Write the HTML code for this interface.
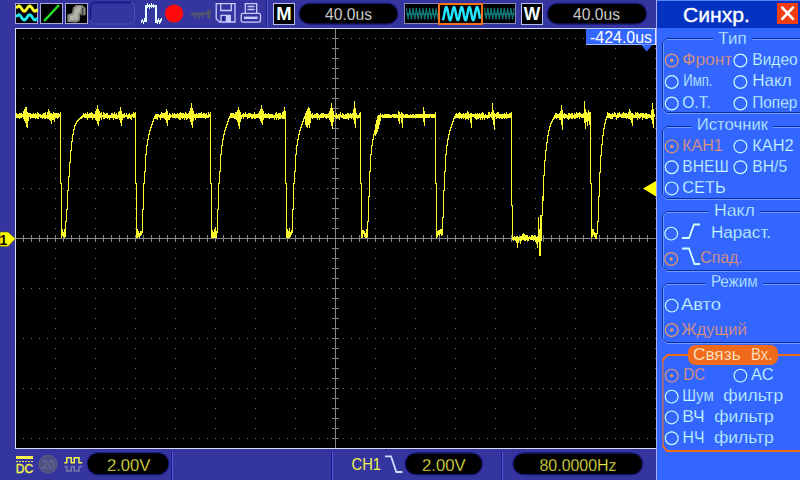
<!DOCTYPE html>
<html lang="ru"><head><meta charset="utf-8"><title>Синхр.</title>
<style>
html,body{margin:0;padding:0;background:#35359f;overflow:hidden}
svg{display:block;font-family:"Liberation Sans",sans-serif}
.c{shape-rendering:crispEdges}
</style></head><body>
<svg width="800" height="480" viewBox="0 0 800 480">
<rect width="800" height="480" fill="#35359f"/>
<g class="c">
<rect x="15" y="28" width="641" height="421" fill="#dadaff"/>
<rect x="16" y="29" width="640" height="419" fill="#000"/>
<path d="M23 38.5H656" stroke="#707070" stroke-dasharray="1 7" fill="none"/>
<path d="M23 88.5H656" stroke="#707070" stroke-dasharray="1 7" fill="none"/>
<path d="M23 138.5H656" stroke="#707070" stroke-dasharray="1 7" fill="none"/>
<path d="M23 188.5H656" stroke="#707070" stroke-dasharray="1 7" fill="none"/>
<path d="M23 288.5H656" stroke="#707070" stroke-dasharray="1 7" fill="none"/>
<path d="M23 338.5H656" stroke="#707070" stroke-dasharray="1 7" fill="none"/>
<path d="M23 388.5H656" stroke="#707070" stroke-dasharray="1 7" fill="none"/>
<path d="M23 438.5H656" stroke="#707070" stroke-dasharray="1 7" fill="none"/>
<path d="M55.5 38V439" stroke="#707070" stroke-dasharray="1 9" fill="none"/>
<path d="M95.5 38V439" stroke="#707070" stroke-dasharray="1 9" fill="none"/>
<path d="M135.5 38V439" stroke="#707070" stroke-dasharray="1 9" fill="none"/>
<path d="M175.5 38V439" stroke="#707070" stroke-dasharray="1 9" fill="none"/>
<path d="M215.5 38V439" stroke="#707070" stroke-dasharray="1 9" fill="none"/>
<path d="M255.5 38V439" stroke="#707070" stroke-dasharray="1 9" fill="none"/>
<path d="M295.5 38V439" stroke="#707070" stroke-dasharray="1 9" fill="none"/>
<path d="M375.5 38V439" stroke="#707070" stroke-dasharray="1 9" fill="none"/>
<path d="M415.5 38V439" stroke="#707070" stroke-dasharray="1 9" fill="none"/>
<path d="M455.5 38V439" stroke="#707070" stroke-dasharray="1 9" fill="none"/>
<path d="M495.5 38V439" stroke="#707070" stroke-dasharray="1 9" fill="none"/>
<path d="M535.5 38V439" stroke="#707070" stroke-dasharray="1 9" fill="none"/>
<path d="M575.5 38V439" stroke="#707070" stroke-dasharray="1 9" fill="none"/>
<path d="M615.5 38V439" stroke="#707070" stroke-dasharray="1 9" fill="none"/>
<path d="M655.5 38V439" stroke="#707070" stroke-dasharray="1 9" fill="none"/>
<path d="M16 238.5H655M335.5 29V448" stroke="#868686" fill="none"/>
<path d="M23.5 235V242M31.5 235V242M39.5 235V242M47.5 235V242M55.5 235V242M63.5 235V242M71.5 235V242M79.5 235V242M87.5 235V242M95.5 235V242M103.5 235V242M111.5 235V242M119.5 235V242M127.5 235V242M135.5 235V242M143.5 235V242M151.5 235V242M159.5 235V242M167.5 235V242M175.5 235V242M183.5 235V242M191.5 235V242M199.5 235V242M207.5 235V242M215.5 235V242M223.5 235V242M231.5 235V242M239.5 235V242M247.5 235V242M255.5 235V242M263.5 235V242M271.5 235V242M279.5 235V242M287.5 235V242M295.5 235V242M303.5 235V242M311.5 235V242M319.5 235V242M327.5 235V242M335.5 235V242M343.5 235V242M351.5 235V242M359.5 235V242M367.5 235V242M375.5 235V242M383.5 235V242M391.5 235V242M399.5 235V242M407.5 235V242M415.5 235V242M423.5 235V242M431.5 235V242M439.5 235V242M447.5 235V242M455.5 235V242M463.5 235V242M471.5 235V242M479.5 235V242M487.5 235V242M495.5 235V242M503.5 235V242M511.5 235V242M519.5 235V242M527.5 235V242M535.5 235V242M543.5 235V242M551.5 235V242M559.5 235V242M567.5 235V242M575.5 235V242M583.5 235V242M591.5 235V242M599.5 235V242M607.5 235V242M615.5 235V242M623.5 235V242M631.5 235V242M639.5 235V242M647.5 235V242M332 38.5H339M332 48.5H339M332 58.5H339M332 68.5H339M332 78.5H339M332 88.5H339M332 98.5H339M332 108.5H339M332 118.5H339M332 128.5H339M332 138.5H339M332 148.5H339M332 158.5H339M332 168.5H339M332 178.5H339M332 188.5H339M332 198.5H339M332 208.5H339M332 218.5H339M332 228.5H339M332 238.5H339M332 248.5H339M332 258.5H339M332 268.5H339M332 278.5H339M332 288.5H339M332 298.5H339M332 308.5H339M332 318.5H339M332 328.5H339M332 338.5H339M332 348.5H339M332 358.5H339M332 368.5H339M332 378.5H339M332 388.5H339M332 398.5H339M332 408.5H339M332 418.5H339M332 428.5H339M332 438.5H339" stroke="#868686" fill="none"/>
<path d="M16.5 113V118M17.5 114V118M18.5 114V118M19.5 113V119M20.5 113V118M21.5 113V118M22.5 114V117M23.5 111V119M24.5 109V121M25.5 107V123M26.5 107V127M27.5 112V128M28.5 113V121M29.5 113V117M30.5 113V119M31.5 114V118M32.5 114V118M33.5 113V118M34.5 114V118M35.5 113V119M36.5 114V118M37.5 112V119M38.5 113V119M39.5 114V117M40.5 114V118M41.5 115V118M42.5 114V119M43.5 113V118M44.5 113V119M45.5 112V119M46.5 115V118M47.5 112V119M48.5 109V119M49.5 111V120M50.5 113V121M51.5 113V124M52.5 114V120M53.5 112V120M54.5 113V122M55.5 113V118M56.5 113V118M57.5 113V119M58.5 113V118M59.5 114V117M60.5 112V184M61.5 183V238M62.5 229V236M63.5 232V237M64.5 229V238M65.5 221V237M66.5 209V222M67.5 190V210M68.5 176V191M69.5 162V177M70.5 150V163M71.5 141V151M72.5 134V142M73.5 129V135M74.5 125V130M75.5 123V126M76.5 121V124M77.5 120V122M78.5 119V121M79.5 118V120M80.5 117V119M81.5 116V119M82.5 115V118M83.5 113V117M84.5 114V118M85.5 113V118M86.5 114V118M87.5 112V120M88.5 114V118M89.5 113V118M90.5 113V118M91.5 112V118M92.5 113V120M93.5 114V118M94.5 114V118M95.5 111V120M96.5 109V121M97.5 105V124M98.5 109V126M99.5 111V121M100.5 113V118M101.5 112V120M102.5 115V117M103.5 112V119M104.5 113V119M105.5 114V118M106.5 113V118M107.5 113V119M108.5 115V118M109.5 115V120M110.5 115V118M111.5 113V118M112.5 113V118M113.5 114V120M114.5 112V118M115.5 114V119M116.5 113V119M117.5 115V119M118.5 112V118M119.5 111V120M120.5 107V123M121.5 111V126M122.5 114V120M123.5 114V118M124.5 113V118M125.5 115V117M126.5 113V117M127.5 115V119M128.5 114V119M129.5 113V118M130.5 115V119M131.5 114V120M132.5 114V117M133.5 112V118M134.5 113V118M135.5 112V184M136.5 183V238M137.5 229V238M138.5 231V237M139.5 233V238M140.5 231V236M141.5 231V235M142.5 209V233M143.5 183V210M144.5 171V184M145.5 154V172M146.5 145V155M147.5 139V146M148.5 134V140M149.5 130V135M150.5 127V131M151.5 124V128M152.5 121V125M153.5 118V122M154.5 116V119M155.5 114V119M156.5 114V119M157.5 114V120M158.5 114V117M159.5 115V118M160.5 114V120M161.5 112V118M162.5 113V118M163.5 113V118M164.5 113V119M165.5 112V120M166.5 109V123M167.5 111V126M168.5 115V120M169.5 113V120M170.5 114V118M171.5 115V117M172.5 113V118M173.5 114V118M174.5 113V118M175.5 114V118M176.5 114V118M177.5 113V118M178.5 114V119M179.5 113V120M180.5 112V120M181.5 113V118M182.5 113V119M183.5 113V118M184.5 114V120M185.5 112V118M186.5 113V120M187.5 114V119M188.5 113V118M189.5 111V119M190.5 108V122M191.5 103V125M192.5 108V128M193.5 111V121M194.5 114V118M195.5 114V120M196.5 113V118M197.5 114V118M198.5 113V118M199.5 113V118M200.5 113V118M201.5 112V118M202.5 114V118M203.5 113V118M204.5 113V118M205.5 114V119M206.5 113V118M207.5 115V118M208.5 112V118M209.5 114V117M210.5 112V184M211.5 183V238M212.5 230V238M213.5 232V238M214.5 229V238M215.5 227V238M216.5 231V238M217.5 209V233M218.5 183V210M219.5 171V184M220.5 154V172M221.5 145V155M222.5 139V146M223.5 134V140M224.5 130V135M225.5 127V131M226.5 124V128M227.5 121V125M228.5 118V122M229.5 116V119M230.5 113V118M231.5 113V118M232.5 113V118M233.5 113V118M234.5 114V119M235.5 112V119M236.5 112V120M237.5 110V122M238.5 107V126M239.5 110V129M240.5 112V122M241.5 115V119M242.5 114V117M243.5 113V119M244.5 114V117M245.5 112V117M246.5 114V117M247.5 114V119M248.5 113V118M249.5 113V118M250.5 113V117M251.5 114V119M252.5 114V119M253.5 114V118M254.5 112V119M255.5 114V119M256.5 114V118M257.5 114V118M258.5 113V118M259.5 111V119M260.5 109V121M261.5 105V123M262.5 109V125M263.5 111V120M264.5 114V118M265.5 113V118M266.5 114V118M267.5 114V118M268.5 113V118M269.5 114V119M270.5 114V118M271.5 114V118M272.5 114V118M273.5 115V118M274.5 115V120M275.5 113V118M276.5 112V120M277.5 114V118M278.5 113V120M279.5 113V119M280.5 113V119M281.5 115V118M282.5 112V119M283.5 111V119M284.5 107V119M285.5 111V184M286.5 183V238M287.5 229V238M288.5 231V238M289.5 228V238M290.5 232V237M291.5 230V235M292.5 209V233M293.5 183V210M294.5 171V184M295.5 154V172M296.5 145V155M297.5 139V146M298.5 134V140M299.5 130V135M300.5 127V131M301.5 124V128M302.5 121V125M303.5 118V122M304.5 116V119M305.5 113V125M306.5 111V127M307.5 109V128M308.5 107V125M309.5 108V128M310.5 111V123M311.5 114V118M312.5 113V119M313.5 115V118M314.5 114V118M315.5 114V118M316.5 113V118M317.5 113V120M318.5 114V118M319.5 115V120M320.5 114V118M321.5 113V118M322.5 113V118M323.5 113V118M324.5 114V117M325.5 114V118M326.5 114V119M327.5 114V118M328.5 113V118M329.5 111V120M330.5 108V122M331.5 103V126M332.5 108V129M333.5 111V122M334.5 115V117M335.5 115V118M336.5 113V119M337.5 115V118M338.5 114V118M339.5 114V120M340.5 112V117M341.5 115V118M342.5 113V118M343.5 114V119M344.5 115V119M345.5 114V119M346.5 114V119M347.5 113V119M348.5 113V120M349.5 114V118M350.5 113V118M351.5 114V119M352.5 113V118M353.5 109V120M354.5 101V124M355.5 108V128M356.5 113V118M357.5 115V119M358.5 115V118M359.5 113V118M360.5 112V184M361.5 183V238M362.5 230V238M363.5 230V234M364.5 231V237M365.5 233V238M366.5 229V238M367.5 221V237M368.5 196V222M369.5 171V197M370.5 154V172M371.5 145V155M372.5 139V146M373.5 134V140M374.5 130V135M375.5 124V136M376.5 120V134M377.5 116V132M378.5 115V129M379.5 115V125M380.5 113V121M381.5 115V117M382.5 114V118M383.5 115V118M384.5 114V118M385.5 114V118M386.5 114V118M387.5 114V118M388.5 114V118M389.5 114V118M390.5 115V118M391.5 115V118M392.5 114V117M393.5 114V118M394.5 114V118M395.5 114V118M396.5 114V118M397.5 115V118M398.5 111V121M399.5 112V124M400.5 114V118M401.5 112V123M402.5 113V128M403.5 114V118M404.5 115V118M405.5 114V118M406.5 114V118M407.5 114V118M408.5 115V118M409.5 115V118M410.5 114V118M411.5 115V118M412.5 114V118M413.5 114V118M414.5 115V118M415.5 114V118M416.5 114V118M417.5 114V118M418.5 114V118M419.5 114V118M420.5 114V118M421.5 114V118M422.5 114V118M423.5 107V122M424.5 111V126M425.5 114V118M426.5 114V118M427.5 114V118M428.5 114V118M429.5 114V118M430.5 114V117M431.5 114V118M432.5 114V118M433.5 114V118M434.5 114V118M435.5 112V184M436.5 183V238M437.5 231V237M438.5 230V235M439.5 230V236M440.5 229V234M441.5 229V236M442.5 217V235M443.5 190V218M444.5 171V191M445.5 154V172M446.5 145V155M447.5 139V146M448.5 134V140M449.5 130V135M450.5 127V131M451.5 124V128M452.5 121V125M453.5 118V122M454.5 116V119M455.5 114V118M456.5 113V118M457.5 114V118M458.5 113V118M459.5 112V119M460.5 113V118M461.5 114V119M462.5 114V118M463.5 113V119M464.5 114V118M465.5 113V120M466.5 113V119M467.5 111V119M468.5 112V120M469.5 114V118M470.5 113V123M471.5 113V128M472.5 114V117M473.5 114V117M474.5 114V118M475.5 113V119M476.5 114V120M477.5 113V119M478.5 114V119M479.5 113V118M480.5 114V120M481.5 113V118M482.5 112V120M483.5 113V118M484.5 115V120M485.5 114V118M486.5 115V118M487.5 115V119M488.5 112V118M489.5 112V118M490.5 114V117M491.5 112V118M492.5 103V120M493.5 110V125M494.5 113V130M495.5 114V117M496.5 113V119M497.5 112V118M498.5 112V118M499.5 114V119M500.5 114V118M501.5 114V119M502.5 114V119M503.5 114V118M504.5 113V119M505.5 114V118M506.5 112V119M507.5 114V118M508.5 114V118M509.5 113V118M510.5 113V118M511.5 112V206M512.5 205V240M513.5 237V241M514.5 236V240M515.5 237V241M516.5 236V243M517.5 236V248M518.5 237V243M519.5 237V240M520.5 236V244M521.5 236V241M522.5 234V240M523.5 233V240M524.5 234V241M525.5 235V241M526.5 235V240M527.5 235V241M528.5 237V241M529.5 236V239M530.5 237V240M531.5 235V240M532.5 235V240M533.5 236V241M534.5 235V240M535.5 236V242M536.5 237V244M537.5 236V248M538.5 217V242M539.5 229V256M540.5 215V256M541.5 215V241M542.5 196V216M543.5 175V201M544.5 160V176M545.5 150V161M546.5 142V151M547.5 135V143M548.5 130V136M549.5 126V131M550.5 123V127M551.5 121V124M552.5 119V122M553.5 117V120M554.5 115V119M555.5 113V118M556.5 113V119M557.5 114V118M558.5 114V118M559.5 113V120M560.5 111V120M561.5 105V125M562.5 110V130M563.5 114V118M564.5 113V119M565.5 114V118M566.5 114V118M567.5 115V119M568.5 113V120M569.5 113V119M570.5 114V118M571.5 113V119M572.5 113V119M573.5 115V118M574.5 113V119M575.5 114V119M576.5 112V118M577.5 113V118M578.5 113V117M579.5 112V119M580.5 113V117M581.5 114V118M582.5 114V118M583.5 113V118M584.5 101V123M585.5 109V129M586.5 112V122M587.5 113V126M588.5 110V121M589.5 112V125M590.5 112V184M591.5 183V238M592.5 229V237M593.5 229V235M594.5 232V237M595.5 233V239M596.5 233V239M597.5 221V234M598.5 196V222M599.5 172V197M600.5 155V173M601.5 144V156M602.5 135V145M603.5 128V136M604.5 123V129M605.5 119V124M606.5 116V120M607.5 112V118M608.5 113V118M609.5 113V118M610.5 114V119M611.5 114V119M612.5 113V119M613.5 114V117M614.5 112V117M615.5 113V117M616.5 115V120M617.5 113V118M618.5 113V118M619.5 112V117M620.5 114V117M621.5 114V118M622.5 113V118M623.5 112V118M624.5 113V118M625.5 113V118M626.5 113V119M627.5 114V118M628.5 112V119M629.5 109V119M630.5 111V120M631.5 113V123M632.5 113V126M633.5 114V118M634.5 115V118M635.5 112V118M636.5 113V118M637.5 112V120M638.5 113V118M639.5 114V119M640.5 113V118M641.5 113V117M642.5 113V120M643.5 113V118M644.5 114V118M645.5 113V119M646.5 113V119M647.5 114V119M648.5 114V118M649.5 114V118M650.5 115V118M651.5 110V120M652.5 103V124M653.5 109V128M654.5 114V117" stroke="#fbfb30" fill="none"/>
</g>
<path d="M0 232H8L15.5 238.8L8 246.4H0Z" fill="#ffff00" stroke="#55551a" stroke-width=".6"/>
<text x="-0.4" y="244.6" font-size="14" font-weight="bold" fill="#100">1</text>
<path d="M643 188.5L656 181V196.5Z" fill="#ffff00"/>
<g class="c"><rect x="586" y="29" width="70" height="16" fill="#3366ff"/><rect x="586" y="28" width="70" height="1" fill="#b9d0ff"/><rect x="586" y="44" width="70" height="1" fill="#9fbcff"/><rect x="655" y="29" width="1" height="16" fill="#e0e8ff"/></g>
<path d="M641 44.5H652.5L646.7 51.5Z" fill="#3366ff"/>
<text x="590" y="43" font-size="16" fill="#fff" textLength="62" lengthAdjust="spacingAndGlyphs">-424.0us</text>
<g class="c"><rect x="15.5" y="3.5" width="22" height="20" fill="#000" stroke="#a9a9dc"/><rect x="40.5" y="3.5" width="22" height="20" fill="#000" stroke="#a9a9dc"/><rect x="65.5" y="3.5" width="22" height="20" fill="#000" stroke="#a9a9dc"/></g>
<path d="M17.2 7.1L17.7 6.6L18.2 6.2L18.7 6.0L19.2 6.0L19.7 6.3L20.2 6.7L20.7 7.3L21.2 8.0L21.7 8.8L22.2 9.5L22.7 10.2L23.2 10.7L23.7 11.1L24.2 11.2L24.7 11.1L25.2 10.8L25.7 10.3L26.2 9.7L26.7 9.0L27.2 8.3L27.7 7.5L28.2 6.9L28.7 6.4L29.2 6.1L29.7 6.0L30.2 6.1L30.7 6.5L31.2 7.0L31.7 7.6L32.2 8.3L32.7 9.1L33.2 9.8L33.7 10.4L34.2 10.9L34.7 11.1L35.2 11.2L35.7 11.0L36.2 10.7L36.7 10.1" stroke="#ffff30" stroke-width="2.9" fill="none" stroke-linecap="round"/>
<path d="M17.2 15.9L17.7 15.4L18.2 15.0L18.7 14.8L19.2 14.8L19.7 15.1L20.2 15.5L20.7 16.1L21.2 16.8L21.7 17.6L22.2 18.3L22.7 19.0L23.2 19.5L23.7 19.9L24.2 20.0L24.7 19.9L25.2 19.6L25.7 19.1L26.2 18.5L26.7 17.8L27.2 17.1L27.7 16.3L28.2 15.7L28.7 15.2L29.2 14.9L29.7 14.8L30.2 14.9L30.7 15.3L31.2 15.8L31.7 16.4L32.2 17.1L32.7 17.9L33.2 18.6L33.7 19.2L34.2 19.7L34.7 19.9L35.2 20.0L35.7 19.8L36.2 19.5L36.7 18.9" stroke="#20e8f0" stroke-width="2.9" fill="none" stroke-linecap="round"/>
<path d="M44.8 20.3L58.4 5.8" stroke="#22e422" stroke-width="2.4" stroke-linecap="round" fill="none"/>
<defs><filter id="bl" x="-20%" y="-20%" width="140%" height="140%"><feGaussianBlur stdDeviation="0.7"/></filter></defs>
<g filter="url(#bl)"><path d="M67.3 22V14.5L72 13L73 7.5L76 5H82L85.6 8V15L82.5 15.5L80.5 14L79.6 21L76 22.4Z" fill="#85857d"/><path d="M69.5 20.5V16L73.5 14.5L75 9L77.5 6.5H81L80 11.5L78.3 14L77.5 20Z" fill="#b2b2aa"/><path d="M82.7 8V15" stroke="#222" stroke-width="1"/></g>
<rect x="90.5" y="2.5" width="44" height="21.5" rx="4.5" fill="none" stroke="#4c4cb8"/><path d="M90.5 20V7A4.5 4.5 0 0 1 95 2.5H131" fill="none" stroke="#141486" stroke-width="1.3"/>
<g class="c" stroke="#e4ffff" fill="none"><path d="M146 22V5M155.5 5V23" stroke-width="2"/><path d="M145 5.5H157" stroke-width="2"/><path d="M147.5 3V8M149.5 4V9M151.5 3V8M153.5 4V8M141.5 20V23M142.5 19V22M143.5 21V24M144.5 18V22M157.5 20V24M158.5 18V22M159.5 20V24M160.5 19V23M161.5 18V21"/></g>
<circle cx="174.1" cy="13.5" r="9.1" fill="#ff0a0a"/>
<g fill="#55556e"><rect x="191" y="12.5" width="17" height="2.5"/><rect x="194" y="15" width="2" height="3"/><rect x="197.5" y="15" width="2" height="3.5"/><rect x="201" y="15" width="2" height="2.5"/><rect x="207.5" y="9.5" width="3" height="9"/></g>
<g fill="none" stroke="#c9cbff" stroke-width="1.3"><path d="M216.2 3.7H235V22H219.5L216.2 18.7Z"/><path d="M220.7 3.7V10.5H231.3V3.7"/><path d="M221 22V15.3H230.3V22"/></g><rect x="225.8" y="15.3" width="4.5" height="6.7" fill="#c9cbff"/><rect x="222.6" y="16.5" width="1.8" height="4.5" fill="#1c1c8e"/>
<g fill="none" stroke="#c9cbff" stroke-width="1.3"><path d="M245.3 13V3.7H256.7V13"/><path d="M247.5 6.5H254.5M247.5 9.5H254.5"/><rect x="241.2" y="13.3" width="19.3" height="8.9" rx="1.8"/></g><rect x="244" y="16.6" width="13.6" height="2.4" fill="#c9cbff"/>
<g class="c"><rect x="266" y="1" width="1" height="26" fill="#1a1a96"/><rect x="267" y="1" width="1" height="26" fill="#5a5acc"/></g>
<rect class="c" x="273.5" y="3.5" width="21" height="21" fill="#000" stroke="#bcbcf0"/>
<text x="284" y="20.2" font-size="18.5" font-weight="bold" fill="#f0ffff" text-anchor="middle">M</text>
<rect x="299.0" y="3.2" width="99.0" height="21.0" rx="10.5" fill="#000" stroke="#1d1d86" stroke-width="1.2"/>
<text x="348.5" y="19.8" font-size="16" fill="#fff" stroke="#000" stroke-width=".3" text-anchor="middle" textLength="47" lengthAdjust="spacingAndGlyphs">40.0us</text>
<rect class="c" x="404.5" y="3.5" width="111" height="20" fill="#000" stroke="#8a8ab8"/>
<path d="M406.50 8.0L408.15 19.5L409.80 8.0L411.45 19.5L413.10 8.0L414.75 19.5L416.40 8.0L418.05 19.5L419.70 8.0L421.35 19.5L423.00 8.0L424.65 19.5L426.30 8.0L427.95 19.5L429.60 8.0L431.25 19.5L432.90 8.0L434.55 19.5L436.20 8.0L437.85 19.5" stroke="#127c7c" stroke-width="1.1" fill="none"/>
<path d="M484.50 8.0L486.15 19.5L487.80 8.0L489.45 19.5L491.10 8.0L492.75 19.5L494.40 8.0L496.05 19.5L497.70 8.0L499.35 19.5L501.00 8.0L502.65 19.5L504.30 8.0L505.95 19.5L507.60 8.0L509.25 19.5L510.90 8.0L512.55 19.5L514.20 8.0" stroke="#127c7c" stroke-width="1.1" fill="none"/>
<path d="M406 14H438M484 14H515" stroke="#138a8a" stroke-width="2" fill="none" opacity=".55"/>
<path d="M442.6 20.2L443.1 19.3L443.6 17.5L444.1 15.1L444.6 12.4L445.1 9.9L445.6 8.1L446.1 7.1L446.6 7.2L447.1 8.4L447.6 10.4L448.1 12.9L448.6 15.6L449.1 17.9L449.6 19.5L450.1 20.2L450.6 19.8L451.1 18.3L451.6 16.1L452.1 13.5L452.6 10.9L453.1 8.7L453.6 7.4L454.1 7.0L454.6 7.8L455.1 9.5L455.6 11.9L456.1 14.5L456.6 17.0L457.1 19.0L457.6 20.1L458.1 20.1L458.6 19.0L459.1 17.1L459.6 14.5L460.1 11.9L460.6 9.5L461.1 7.8L461.6 7.0L462.1 7.3L462.6 8.7L463.1 10.8L463.6 13.5L464.1 16.1L464.6 18.3L465.1 19.8L465.6 20.2L466.1 19.6L466.6 17.9L467.1 15.6L467.6 12.9L468.1 10.4L468.6 8.4L469.1 7.2L469.6 7.1L470.1 8.0L470.6 9.9L471.1 12.4L471.6 15.1L472.1 17.5L472.6 19.3L473.1 20.1L473.6 19.9L474.1 18.7L474.6 16.6L475.1 14.0L475.6 11.4L476.1 9.1L476.6 7.5L477.1 7.0L477.6 7.5L478.1 9.1L478.6 11.3L479.1 14.0L479.6 16.6L480.1 18.7" stroke="#22e6ff" stroke-width="2.5" fill="none" stroke-linejoin="round"/>
<rect class="c" x="439" y="4" width="43" height="20" fill="none" stroke="#f27420" stroke-width="2"/>
<rect class="c" x="521.5" y="3.5" width="21" height="21" fill="#000" stroke="#bcbcf0"/>
<text x="532" y="20.2" font-size="18" font-weight="bold" fill="#f0ffff" text-anchor="middle" textLength="16.5" lengthAdjust="spacingAndGlyphs">W</text>
<rect x="547.2" y="3.2" width="99.5" height="21.0" rx="10.5" fill="#000" stroke="#1d1d86" stroke-width="1.2"/>
<text x="596.5" y="19.8" font-size="16" fill="#fff" stroke="#000" stroke-width=".3" text-anchor="middle" textLength="47" lengthAdjust="spacingAndGlyphs">40.0us</text>
<g class="c"><rect x="656" y="0" width="1" height="480" fill="#a8acf2"/><rect x="657" y="0" width="143" height="28" fill="#0433c2"/><rect x="657" y="28" width="143" height="452" fill="#3366ff"/><rect x="657" y="0" width="143" height="1" fill="#5a82f2"/><rect x="777" y="3" width="21" height="21" fill="#f03e14"/></g>
<path d="M781.6 6.8L793.6 19.6M793.6 6.8L781.6 19.6" stroke="#fff" stroke-width="2.6" fill="none"/>
<text x="683" y="22" font-size="20" fill="#fff" stroke="#fff" stroke-width=".35" textLength="67" lengthAdjust="spacingAndGlyphs">Синхр.</text>
<path d="M801 39.5H666.5L662.5 43.5V109.5L666.5 113.5H801" fill="none" stroke="#6f9aff"/><path d="M801 38.5H666.5L662.5 42.5V108.5L666.5 112.5H801" fill="none" stroke="#07309f"/>
<path d="M663.5 43.5V108.5" stroke="#6f9aff" fill="none"/>
<rect x="713.0" y="32" width="39.0" height="14" fill="#3366ff"/><text x="718.3" y="44.0" font-size="16" fill="#ccffff" stroke="#3366ff" stroke-width=".3" textLength="28.4" lengthAdjust="spacingAndGlyphs">Тип</text>
<circle cx="671.7" cy="60.5" r="6.4" fill="none" stroke="#ea9566" stroke-width="1.15"/><circle cx="671.7" cy="60.5" r="1.7" fill="#ea9566"/><text x="682.3" y="64.6" font-size="16" fill="#ea9566" stroke="#3366ff" stroke-width=".25" textLength="49.9" lengthAdjust="spacingAndGlyphs">Фронт</text>
<circle cx="740.4" cy="60.5" r="6.4" fill="none" stroke="#ccffff" stroke-width="1.15"/><text x="752.3" y="64.6" font-size="16" fill="#ccffff" stroke="#3366ff" stroke-width=".25" textLength="45.4" lengthAdjust="spacingAndGlyphs">Видео</text>
<circle cx="671.7" cy="82.0" r="6.4" fill="none" stroke="#ccffff" stroke-width="1.15"/><text x="683.3" y="86.4" font-size="16" fill="#ccffff" stroke="#3366ff" stroke-width=".25" textLength="29.2" lengthAdjust="spacingAndGlyphs">Имп.</text>
<circle cx="740.4" cy="82.0" r="6.4" fill="none" stroke="#ccffff" stroke-width="1.15"/><text x="752.3" y="86.4" font-size="16" fill="#ccffff" stroke="#3366ff" stroke-width=".25" textLength="39.4" lengthAdjust="spacingAndGlyphs">Накл</text>
<circle cx="671.7" cy="103.5" r="6.4" fill="none" stroke="#ccffff" stroke-width="1.15"/><text x="682.3" y="108.0" font-size="16" fill="#ccffff" stroke="#3366ff" stroke-width=".25" textLength="28.4" lengthAdjust="spacingAndGlyphs">О.Т.</text>
<circle cx="740.4" cy="103.5" r="6.4" fill="none" stroke="#ccffff" stroke-width="1.15"/><text x="752.3" y="108.0" font-size="16" fill="#ccffff" stroke="#3366ff" stroke-width=".25" textLength="44.9" lengthAdjust="spacingAndGlyphs">Попер</text>
<path d="M801 127.5H666.5L662.5 131.5V195.5L666.5 199.5H801" fill="none" stroke="#6f9aff"/><path d="M801 126.5H666.5L662.5 130.5V194.5L666.5 198.5H801" fill="none" stroke="#07309f"/>
<path d="M663.5 131.5V194.5" stroke="#6f9aff" fill="none"/>
<rect x="691.5" y="118" width="81.8" height="14" fill="#3366ff"/><text x="696.8" y="130.4" font-size="16" fill="#ccffff" stroke="#3366ff" stroke-width=".3" textLength="71.2" lengthAdjust="spacingAndGlyphs">Источник</text>
<circle cx="671.7" cy="146.4" r="6.4" fill="none" stroke="#ea9566" stroke-width="1.15"/><circle cx="671.7" cy="146.4" r="1.7" fill="#ea9566"/><text x="682.3" y="151.0" font-size="16" fill="#ea9566" stroke="#3366ff" stroke-width=".25" textLength="40.4" lengthAdjust="spacingAndGlyphs">КАН1</text>
<circle cx="740.4" cy="146.4" r="6.4" fill="none" stroke="#ccffff" stroke-width="1.15"/><text x="752.3" y="151.0" font-size="16" fill="#ccffff" stroke="#3366ff" stroke-width=".25" textLength="41.4" lengthAdjust="spacingAndGlyphs">КАН2</text>
<circle cx="671.7" cy="167.2" r="6.4" fill="none" stroke="#ccffff" stroke-width="1.15"/><text x="682.3" y="171.8" font-size="16" fill="#ccffff" stroke="#3366ff" stroke-width=".25" textLength="46.4" lengthAdjust="spacingAndGlyphs">ВНЕШ</text>
<circle cx="740.4" cy="167.2" r="6.4" fill="none" stroke="#ccffff" stroke-width="1.15"/><text x="752.3" y="171.8" font-size="16" fill="#ccffff" stroke="#3366ff" stroke-width=".25" textLength="34.8" lengthAdjust="spacingAndGlyphs">ВН/5</text>
<circle cx="671.7" cy="188.4" r="6.4" fill="none" stroke="#ccffff" stroke-width="1.15"/><text x="682.3" y="192.6" font-size="16" fill="#ccffff" stroke="#3366ff" stroke-width=".25" textLength="43.4" lengthAdjust="spacingAndGlyphs">СЕТЬ</text>
<path d="M801 212.5H666.5L662.5 216.5V267.5L666.5 271.5H801" fill="none" stroke="#6f9aff"/><path d="M801 211.5H666.5L662.5 215.5V266.5L666.5 270.5H801" fill="none" stroke="#07309f"/>
<path d="M663.5 216.5V266.5" stroke="#6f9aff" fill="none"/>
<rect x="708.6" y="203" width="51.4" height="14" fill="#3366ff"/><text x="713.9" y="215.6" font-size="16" fill="#ccffff" stroke="#3366ff" stroke-width=".3" textLength="40.8" lengthAdjust="spacingAndGlyphs">Накл</text>
<circle cx="671.2" cy="233.6" r="6.4" fill="none" stroke="#ccffff" stroke-width="1.15"/><path d="M682 238H689L694 224.5H700" stroke="#d4ffff" stroke-width="1.8" fill="none"/>
<text x="710.9" y="237.6" font-size="16" fill="#ccffff" stroke="#3366ff" stroke-width=".25" textLength="60.2" lengthAdjust="spacingAndGlyphs">Нараст.</text>
<circle cx="671.2" cy="259.0" r="6.4" fill="none" stroke="#ea9566" stroke-width="1.15"/><circle cx="671.2" cy="259.0" r="1.7" fill="#ea9566"/><path d="M682 248.5H689L694.5 264H700" stroke="#d4ffff" stroke-width="1.8" fill="none"/>
<text x="700.3" y="263.0" font-size="16" fill="#ea9566" stroke="#3366ff" stroke-width=".25" textLength="42.4" lengthAdjust="spacingAndGlyphs">Спад.</text>
<path d="M801 284.5H666.5L662.5 288.5V339.5L666.5 343.5H801" fill="none" stroke="#6f9aff"/><path d="M801 283.5H666.5L662.5 287.5V338.5L666.5 342.5H801" fill="none" stroke="#07309f"/>
<path d="M663.5 288.5V338.5" stroke="#6f9aff" fill="none"/>
<rect x="705.6" y="275" width="57.4" height="14" fill="#3366ff"/><text x="710.9" y="287.2" font-size="16" fill="#ccffff" stroke="#3366ff" stroke-width=".3" textLength="46.8" lengthAdjust="spacingAndGlyphs">Режим</text>
<circle cx="671.7" cy="305.6" r="6.4" fill="none" stroke="#ccffff" stroke-width="1.15"/><text x="680.9" y="310.0" font-size="16" fill="#ccffff" stroke="#3366ff" stroke-width=".25" textLength="40.2" lengthAdjust="spacingAndGlyphs">Авто</text>
<circle cx="671.7" cy="330.0" r="6.4" fill="none" stroke="#ea9566" stroke-width="1.15"/><circle cx="671.7" cy="330.0" r="1.7" fill="#ea9566"/><text x="681.3" y="335.0" font-size="16" fill="#ea9566" stroke="#3366ff" stroke-width=".25" textLength="65.4" lengthAdjust="spacingAndGlyphs">Ждущий</text>
<path d="M801 355.0H667.5L663 359.5V446L667 451.0H801" fill="none" stroke="#f06a1c" stroke-width="2"/><path d="M663 361V445" stroke="#3366ff" stroke-width="2.4" opacity=".45"/>
<rect x="688" y="345" width="90" height="20" rx="7.5" fill="#f06a1c"/>
<text x="692.9" y="359.6" font-size="16" fill="#fff4d8" stroke="#f06a1c" stroke-width=".25" textLength="47.8" lengthAdjust="spacingAndGlyphs">Связь</text>
<text x="750.9" y="359.6" font-size="16" fill="#fff4d8" stroke="#f06a1c" stroke-width=".25" textLength="21.4" lengthAdjust="spacingAndGlyphs">Вх.</text>
<circle cx="671.7" cy="375.6" r="6.4" fill="none" stroke="#ea9566" stroke-width="1.15"/><circle cx="671.7" cy="375.6" r="1.7" fill="#ea9566"/><text x="683.3" y="380.2" font-size="16" fill="#ea9566" stroke="#3366ff" stroke-width=".25" textLength="21.8" lengthAdjust="spacingAndGlyphs">DC</text>
<circle cx="740.4" cy="375.6" r="6.4" fill="none" stroke="#ccffff" stroke-width="1.15"/><text x="750.9" y="380.2" font-size="16" fill="#ccffff" stroke="#3366ff" stroke-width=".25" textLength="22.8" lengthAdjust="spacingAndGlyphs">AC</text>
<circle cx="671.7" cy="396.6" r="6.4" fill="none" stroke="#ccffff" stroke-width="1.15"/><text x="682.3" y="401.2" font-size="16" fill="#ccffff" stroke="#3366ff" stroke-width=".25" textLength="31.4" lengthAdjust="spacingAndGlyphs">Шум</text>
<text x="723.3" y="401.2" font-size="16" fill="#ccffff" stroke="#3366ff" stroke-width=".25" textLength="59.8" lengthAdjust="spacingAndGlyphs">фильтр</text>
<circle cx="671.7" cy="417.4" r="6.4" fill="none" stroke="#ccffff" stroke-width="1.15"/><text x="682.3" y="422.0" font-size="16" fill="#ccffff" stroke="#3366ff" stroke-width=".25" textLength="22.4" lengthAdjust="spacingAndGlyphs">ВЧ</text>
<text x="714.3" y="422.0" font-size="16" fill="#ccffff" stroke="#3366ff" stroke-width=".25" textLength="59.4" lengthAdjust="spacingAndGlyphs">фильтр</text>
<circle cx="671.7" cy="438.2" r="6.4" fill="none" stroke="#ccffff" stroke-width="1.15"/><text x="682.6" y="443.0" font-size="16" fill="#ccffff" stroke="#3366ff" stroke-width=".25" textLength="21.8" lengthAdjust="spacingAndGlyphs">НЧ</text>
<text x="713.9" y="443.0" font-size="16" fill="#ccffff" stroke="#3366ff" stroke-width=".25" textLength="59.8" lengthAdjust="spacingAndGlyphs">фильтр</text>
<g class="c"><rect x="16" y="456" width="17" height="3" fill="#f2f24a"/><path d="M16 461.5H33" stroke="#f2f24a" stroke-dasharray="2 1" fill="none"/></g>
<text x="15.8" y="473.2" font-size="12.5" fill="#f2f24a" stroke="#f2f24a" stroke-width=".4" textLength="17.4" lengthAdjust="spacingAndGlyphs">DC</text>
<circle cx="48" cy="464.3" r="8.8" fill="#4e4e80" stroke="#585884" stroke-width="1.5"/><text x="48" y="469" font-size="12" fill="#626292" text-anchor="middle" font-weight="bold">20</text>
<path d="M64.3 462.7H66.8V457.7H71.3V462.7H74.3V457.7H79V462.7H82.2" stroke="#f2f24a" stroke-width="1.5" fill="none"/>
<path d="M64.3 466.7H66.8V471H71.3V466.7H74.3V471H79V466.7H82.2" stroke="#7676ae" stroke-width="1.5" fill="none"/>
<rect x="87.0" y="452.6" width="82.0" height="22.3" rx="11.2" fill="#000" stroke="#1d1d86" stroke-width="1.2"/>
<text x="128.7" y="470.6" font-size="16" fill="#f2f24a" stroke="#000" stroke-width=".3" text-anchor="middle" textLength="43.5" lengthAdjust="spacingAndGlyphs">2.00V</text>
<g class="c"><rect x="171" y="452" width="1" height="28" fill="#1a1a96"/><rect x="172" y="452" width="1" height="28" fill="#5a5acc"/><rect x="331" y="452" width="1" height="28" fill="#1a1a96"/><rect x="332" y="452" width="1" height="28" fill="#5a5acc"/><rect x="501" y="452" width="1" height="28" fill="#1a1a96"/><rect x="502" y="452" width="1" height="28" fill="#5a5acc"/></g>
<text x="351.6" y="469.8" font-size="16" fill="#f2f24a" textLength="29.4" lengthAdjust="spacingAndGlyphs">CH1</text>
<path d="M385 456.3H391L396.3 472H402.5" stroke="#cfdcff" stroke-width="1.8" fill="none"/>
<rect x="405.0" y="452.8" width="77.6" height="22.0" rx="11.0" fill="#000" stroke="#1d1d86" stroke-width="1.2"/>
<text x="443.8" y="470.6" font-size="16" fill="#f2f24a" stroke="#000" stroke-width=".3" text-anchor="middle" textLength="43.5" lengthAdjust="spacingAndGlyphs">2.00V</text>
<rect x="512.8" y="452.8" width="130.0" height="22.0" rx="11.0" fill="#000" stroke="#1d1d86" stroke-width="1.2"/>
<text x="578" y="470.6" font-size="16" fill="#f2f24a" stroke="#000" stroke-width=".3" text-anchor="middle" textLength="77" lengthAdjust="spacingAndGlyphs">80.0000Hz</text>
</svg>
</body></html>
